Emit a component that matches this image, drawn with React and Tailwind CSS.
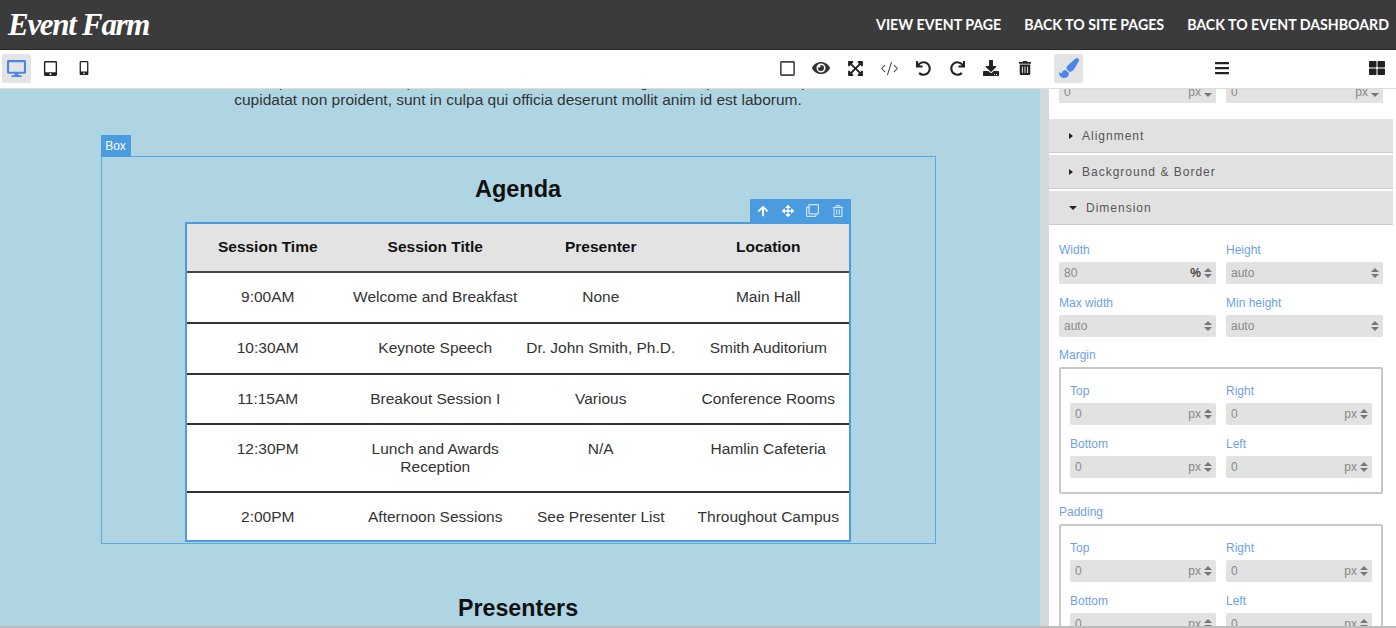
import { CodeXml } from 'lucide-react';
import {
  FaArrowUp,
  FaArrowsAlt,
  FaBars,
  FaDesktop,
  FaDownload,
  FaExpandArrowsAlt,
  FaEye,
  FaMobileAlt,
  FaPaintBrush,
  FaRedo,
  FaRegClone,
  FaRegSquare,
  FaRegTrashAlt,
  FaTabletAlt,
  FaThLarge,
  FaTrashAlt,
  FaUndo,
} from 'react-icons/fa';

const sessions = [
  { cells: ['9:00AM', 'Welcome and Breakfast', 'None', 'Main Hall'], cellClass: 'border-b-2 border-[#333] pb-[16px]' },
  { cells: ['10:30AM', 'Keynote Speech', 'Dr. John Smith, Ph.D.', 'Smith Auditorium'], cellClass: 'border-b-2 border-[#333] pb-[16px]' },
  { cells: ['11:15AM', 'Breakout Session I', 'Various', 'Conference Rooms'], cellClass: 'border-b-2 border-[#333] pb-[15px]' },
  { cells: ['12:30PM', 'Lunch and Awards Reception', 'N/A', 'Hamlin Cafeteria'], cellClass: 'border-b-2 border-[#333] pb-[15px]' },
  { cells: ['2:00PM', 'Afternoon Sessions', 'See Presenter List', 'Throughout Campus'], cellClass: 'pb-[14px]' },
];

const toolbarIcons = [
  <FaRegSquare key="square" size={17} className="text-[#444]" />,
  <FaEye key="eye" size={18} className="text-[#333]" />,
  <FaExpandArrowsAlt key="expand" size={17} />,
  <CodeXml key="code" size={19} strokeWidth={1.3} className="text-[#444]" />,
  <FaUndo key="undo" size={15} />,
  <FaRedo key="redo" size={15} />,
  <FaDownload key="download" size={16} />,
  <FaTrashAlt key="trash" size={14} />,
];

function Spinner() {
  return (
    <span className="flex flex-col gap-[2px] text-[#777]">
      <span className="h-0 w-0 border-x-[4px] border-b-[4px] border-x-transparent border-b-current" />
      <span className="h-0 w-0 border-x-[4px] border-t-[4px] border-x-transparent border-t-current" />
    </span>
  );
}

function Field({ label, value, unit, unitClass = 'text-[#888]' }) {
  return (
    <div>
      <div className="h-[20px] text-[12px] leading-[16px] text-[#6f9fe8]">{label}</div>
      <div className="flex h-[22px] items-center rounded-[2px] bg-[#e2e2e2] pl-[5px] pr-[4px] text-[12px] text-[#8a8a8a]">
        <span className="flex-1">{value}</span>
        {unit && <span className={`mr-[3px] ${unitClass}`}>{unit}</span>}
        <Spinner />
      </div>
    </div>
  );
}

function FourSides({ tall }) {
  return (
    <div className={`grid grid-cols-2 content-start gap-x-[10px] gap-y-[11px] rounded-[2px] border-2 border-[#c8c8c8] px-[9px] pt-[14px] ${tall ? 'h-[200px]' : 'h-[127px]'}`}>
      <Field label="Top" value="0" unit="px" />
      <Field label="Right" value="0" unit="px" />
      <Field label="Bottom" value="0" unit="px" />
      <Field label="Left" value="0" unit="px" />
    </div>
  );
}

function ClippedField() {
  return (
    <div className="-mt-[8px] flex h-[22px] items-center bg-[#e2e2e2] pl-[5px] pr-[4px] text-[12px] text-[#888]">
      <span className="flex-1">0</span>
      <span className="mr-[3px]">px</span>
      <span className="mt-[6px] h-0 w-0 border-x-[4px] border-t-[4px] border-x-transparent border-t-[#777]" />
    </div>
  );
}

function Section({ title, open }) {
  return (
    <div className="mb-[2px] flex h-[34px] items-center border-b border-[#cdcdcd] bg-[#e1e1e1] pl-[20px] text-[12px] tracking-[1px] text-[#555]">
      {open ? (
        <span className="mr-[9px] h-0 w-0 border-x-[4px] border-t-[4px] border-x-transparent border-t-[#222]" />
      ) : (
        <span className="mr-[9px] h-0 w-0 border-y-[3.5px] border-l-[4px] border-y-transparent border-l-[#222]" />
      )}
      {title}
    </div>
  );
}

export default function App() {
  return (
    <div className="flex h-[628px] w-[1396px] flex-col overflow-hidden bg-white font-['Liberation_Sans',sans-serif]">
      <header className="flex h-[50px] shrink-0 items-center justify-between border-b border-[#2a2a2a] bg-[#3b3b3b] pl-[8px] pr-[7px]">
        <div className="font-['Liberation_Serif',serif] text-[31px] font-bold italic leading-none tracking-[-1.3px] text-white">
          Event Farm
        </div>
        <nav className="flex gap-[23px] font-['Lato',sans-serif] text-[14.2px] font-bold text-white">
          <span>VIEW EVENT PAGE</span>
          <span>BACK TO SITE PAGES</span>
          <span>BACK TO EVENT DASHBOARD</span>
        </nav>
      </header>

      <div className="flex h-[39px] shrink-0 items-center border-b border-[#ddd] bg-white pb-[2px]">
        <div className="flex w-[1049px] items-center justify-between pl-[2px] pr-[7px]">
          <div className="flex items-center">
            <span className="flex h-[29px] w-[29px] items-center justify-center rounded-[2px] bg-[#e4e4e4] text-[#4a86e8]">
              <FaDesktop size={19} />
            </span>
            <span className="ml-[7px] flex w-[24px] justify-center text-[#222]"><FaTabletAlt size={15} /></span>
            <span className="ml-[10px] flex w-[24px] justify-center text-[#222]"><FaMobileAlt size={14} /></span>
          </div>
          <div className="flex items-center text-[#222]">
            {toolbarIcons.map((icon) => (
              <span key={icon.key} className="flex w-[34px] justify-center">{icon}</span>
            ))}
          </div>
        </div>
        <div className="flex flex-1 items-center pl-[5px] pr-[11px] text-[#222]">
          <span className="flex h-[29px] w-[29px] items-center justify-center rounded-[2px] bg-[#e4e4e4] text-[#4a86e8]">
            <FaPaintBrush size={20} />
          </span>
          <FaBars size={16} className="ml-[131px]" />
          <FaThLarge size={16} className="ml-auto" />
        </div>
      </div>

      <div className="flex min-h-0 flex-1 border-b-2 border-[#bdbdbd]">
        <main className="flex w-[1040px] shrink-0 flex-col items-center overflow-hidden bg-[#afd5e3] pr-[4px]">
          <p className="-mt-[16px] whitespace-nowrap text-center text-[15.5px] leading-[18px] text-[#333]">
            <span className="block">Duis aute irure dolor in reprehenderit in voluptate velit esse cillum dolore eu fugiat nulla pariatur. Excepteur sint occaecat</span>
            <span className="block">cupidatat non proident, sunt in culpa qui officia deserunt mollit anim id est laborum.</span>
          </p>

          <div className="relative mt-[47px] h-[388px] w-[835px] shrink-0 border border-[#5ba8e3]">
            <span className="absolute -left-px -top-[22px] flex h-[22px] w-[30px] items-center justify-center bg-[#4a9be0] text-[12px] text-white">
              Box
            </span>
            <h2 className="mt-[17px] text-center text-[23.5px] font-bold leading-[30px] text-[#111]">Agenda</h2>
            <div className="relative mx-auto mt-[18px] w-[666px] border-2 border-[#4a9be0] bg-white text-[15.5px] leading-[18px] text-[#333]">
              <div className="absolute -right-[2px] -top-[25px] flex h-[23px] w-[101px] items-center justify-between bg-[#4a9be0] px-[7px] text-white">
                <FaArrowUp size={12} />
                <FaArrowsAlt size={12} />
                <FaRegClone size={13} className="text-[#cfe4f7]" />
                <FaRegTrashAlt size={12} className="text-[#cfe4f7]" />
              </div>
              <table className="w-full table-fixed border-collapse text-center">
                <thead>
                  <tr className="bg-[#e3e3e3] text-[#111]">
                    {['Session Time', 'Session Title', 'Presenter', 'Location'].map((h) => (
                      <th key={h} className="border-b-2 border-[#444] pt-[14px] pb-[15px] font-bold first:pr-[4px] last:pl-[4px]">{h}</th>
                    ))}
                  </tr>
                </thead>
                <tbody>
                  {sessions.map((row) => (
                    <tr key={row.cells[0]}>
                      {row.cells.map((cell) => (
                        <td key={cell} className={`px-0 pt-[15px] align-top first:pr-[4px] last:pl-[4px] ${row.cellClass}`}>
                          {cell}
                        </td>
                      ))}
                    </tr>
                  ))}
                </tbody>
              </table>
            </div>
          </div>

          <h2 className="mt-[49px] shrink-0 text-[23.25px] font-bold leading-[30px] text-[#111]">Presenters</h2>
        </main>

        <div className="w-[9px] shrink-0 bg-[#d3d9da]" />

        <aside className="w-[347px] shrink-0 overflow-hidden bg-white pr-[3px]">
          <div className="grid h-[30px] grid-cols-2 gap-x-[10px] px-[10px]">
            <ClippedField />
            <ClippedField />
          </div>
          <Section title="Alignment" />
          <Section title="Background & Border" />
          <Section title="Dimension" open />
          <div className="px-[10px] pt-[15px]">
            <div className="grid grid-cols-2 gap-x-[10px] gap-y-[11px]">
              <Field label="Width" value="80" unit="%" unitClass="font-bold text-[#444]" />
              <Field label="Height" value="auto" />
              <Field label="Max width" value="auto" />
              <Field label="Min height" value="auto" />
            </div>
            <div className="mt-[10px] h-[20px] text-[12px] leading-[16px] text-[#6f9fe8]">Margin</div>
            <FourSides />
            <div className="mt-[10px] h-[20px] text-[12px] leading-[16px] text-[#6f9fe8]">Padding</div>
            <FourSides tall />
          </div>
        </aside>
      </div>
    </div>
  );
}
